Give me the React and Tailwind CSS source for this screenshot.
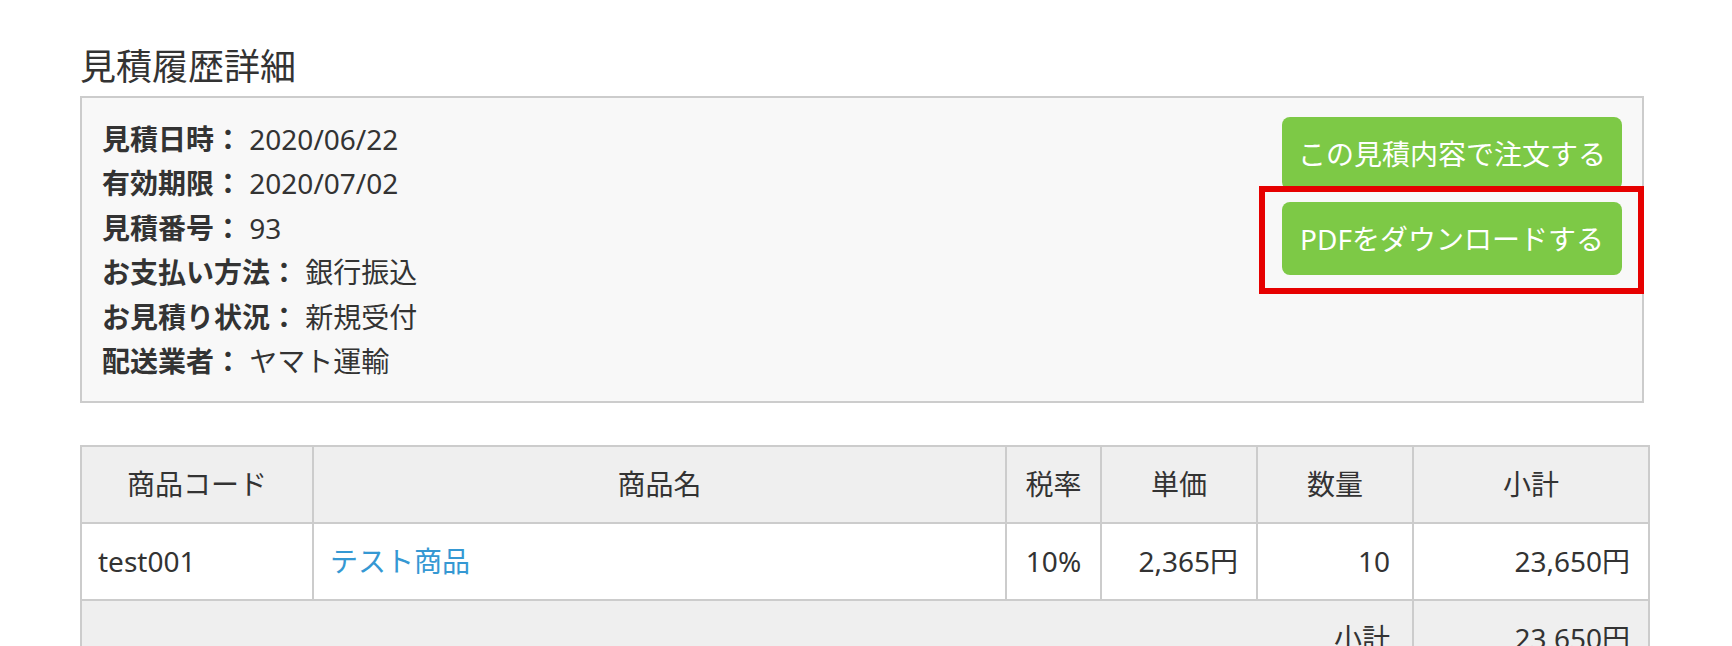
import React from 'react';

const info = [
  ['見積日時', '2020/06/22'],
  ['有効期限', '2020/07/02'],
  ['見積番号', '93'],
  ['お支払い方法', '銀行振込'],
  ['お見積り状況', '新規受付'],
  ['配送業者', 'ヤマト運輸'],
];

const th = 'border-2 border-[#cccccc] bg-[#efefef] px-[18px] py-4 text-center font-normal';
const td = 'border-2 border-[#cccccc] px-[18px] py-4';

export default function App() {
  return (
    <div
      className="min-h-screen bg-white text-[#333333] text-[28px]"
      style={{ fontFamily: '"Noto Sans", "Noto Sans CJK JP", sans-serif' }}
    >
      <div className="w-[1564px] ml-[80px]">
        <h1 className="pt-[49px] mb-[11px] text-[36px] leading-[36px] font-normal">見積履歴詳細</h1>

        <div className="flex justify-between border-2 border-[#cccccc] bg-[#f8f8f8] pl-5 pr-5 pt-[19px] pb-[18px]">
          <div className="leading-[44.4px]">
            {info.map(([label, value]) => (
              <div key={label}>
                <span className="font-bold">{label}：</span> {value}
              </div>
            ))}
          </div>
          <div className="flex flex-col gap-3 w-[340px]">
            <button className="h-[73px] rounded-lg bg-[#7dc946] text-white text-[28px]">
              この見積内容で注文する
            </button>
            <div className="relative">
              <button className="w-full h-[73px] rounded-lg bg-[#7dc946] text-white text-[28px]">
                PDFをダウンロードする
              </button>
              <div className="absolute -left-[23px] -top-[16px] -right-[22px] -bottom-[19px] border-[6px] border-[#e60000] pointer-events-none"></div>
            </div>
          </div>
        </div>

        <table className="mt-[42px] w-[1568px] table-fixed border-collapse leading-[43px]">
          <colgroup>
            <col className="w-[232px]" />
            <col className="w-[693px]" />
            <col className="w-[95px]" />
            <col className="w-[156px]" />
            <col className="w-[156px]" />
            <col className="w-[236px]" />
          </colgroup>
          <thead>
            <tr>
              <th className={th}>商品コード</th>
              <th className={th}>商品名</th>
              <th className={th + ' px-0'}>税率</th>
              <th className={th}>単価</th>
              <th className={th}>数量</th>
              <th className={th}>小計</th>
            </tr>
          </thead>
          <tbody>
            <tr className="bg-white">
              <td className={td + ' pl-4'}>test001</td>
              <td className={td + ' pl-4'}>
                <a href="#" className="text-[#3598d3]">テスト商品</a>
              </td>
              <td className={td + ' px-0 text-center'}>10%</td>
              <td className={td + ' text-right'}>2,365円</td>
              <td className={td + ' text-right pr-[22px]'}>10</td>
              <td className={td + ' text-right'}>23,650円</td>
            </tr>
            <tr className="bg-[#efefef]">
              <td colSpan={5} className={td + ' text-right pr-[22px]'}>小計</td>
              <td className={td + ' text-right'}>23,650円</td>
            </tr>
          </tbody>
        </table>
      </div>
    </div>
  );
}
